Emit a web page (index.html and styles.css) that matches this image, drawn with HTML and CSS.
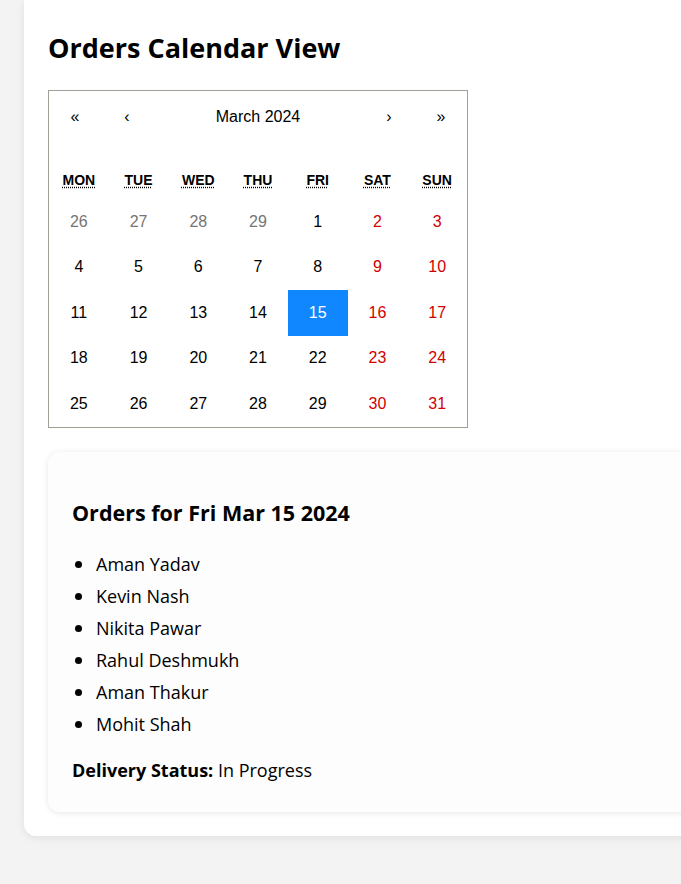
FILE: index.html
```html
<!DOCTYPE html>
<html lang="en">
<head>
<meta charset="utf-8">
<title>Orders Calendar View</title>
<link rel="stylesheet" href="styles.css">
</head>
<body>
<div class="page">
  <main class="panel">
    <h1 class="title">Orders Calendar View</h1>
    <div class="calendar">
      <div class="cal-nav">
        <button class="nav-btn">«</button>
        <button class="nav-btn">‹</button>
        <button class="nav-label">March 2024</button>
        <button class="nav-btn">›</button>
        <button class="nav-btn">»</button>
      </div>
      <div class="cal-weekdays">
        <div class="wd"><abbr title="Monday">MON</abbr></div>
        <div class="wd"><abbr title="Tuesday">TUE</abbr></div>
        <div class="wd"><abbr title="Wednesday">WED</abbr></div>
        <div class="wd"><abbr title="Thursday">THU</abbr></div>
        <div class="wd"><abbr title="Friday">FRI</abbr></div>
        <div class="wd"><abbr title="Saturday">SAT</abbr></div>
        <div class="wd"><abbr title="Sunday">SUN</abbr></div>
      </div>
      <div class="cal-days">
        <button class="tile other">26</button>
        <button class="tile other">27</button>
        <button class="tile other">28</button>
        <button class="tile other">29</button>
        <button class="tile">1</button>
        <button class="tile weekend">2</button>
        <button class="tile weekend">3</button>
        <button class="tile">4</button>
        <button class="tile">5</button>
        <button class="tile">6</button>
        <button class="tile">7</button>
        <button class="tile">8</button>
        <button class="tile weekend">9</button>
        <button class="tile weekend">10</button>
        <button class="tile">11</button>
        <button class="tile">12</button>
        <button class="tile">13</button>
        <button class="tile">14</button>
        <button class="tile active">15</button>
        <button class="tile weekend">16</button>
        <button class="tile weekend">17</button>
        <button class="tile">18</button>
        <button class="tile">19</button>
        <button class="tile">20</button>
        <button class="tile">21</button>
        <button class="tile">22</button>
        <button class="tile weekend">23</button>
        <button class="tile weekend">24</button>
        <button class="tile">25</button>
        <button class="tile">26</button>
        <button class="tile">27</button>
        <button class="tile">28</button>
        <button class="tile">29</button>
        <button class="tile weekend">30</button>
        <button class="tile weekend">31</button>
      </div>
    </div>
    <section class="orders-card">
      <h3 class="orders-title">Orders for Fri Mar 15 2024</h3>
      <ul class="orders-list">
        <li>Aman Yadav</li>
        <li>Kevin Nash</li>
        <li>Nikita Pawar</li>
        <li>Rahul Deshmukh</li>
        <li>Aman Thakur</li>
        <li>Mohit Shah</li>
      </ul>
      <p class="status"><strong>Delivery Status:</strong> In Progress</p>
    </section>
  </main>
</div>
</body>
</html>
```
FILE: styles.css
```css
html, body {
  margin: 0;
  padding: 0;
}
body {
  background: #f3f3f3;
  overflow: hidden;
  font-family: "Open Sans", "Noto Sans", sans-serif;
  color: #000;
}
.page {
  padding: 0 0 48px 24px;
}
.panel {
  width: 720px;
  background: #fff;
  border-radius: 0 0 0 12px;
  box-shadow: 0 2px 8px rgba(0, 0, 0, 0.08);
  padding: 24px 24px 24px 24px;
  box-sizing: border-box;
}
.title {
  margin: 0 0 18px 0;
  font-size: 27px;
  line-height: 48px;
  font-weight: 700;
}
.calendar {
  width: 420px;
  box-sizing: border-box;
  border: 1px solid #a0a096;
  background: #fff;
  font-family: "Liberation Sans", Arial, sans-serif;
}
.cal-nav {
  display: flex;
  height: 51px;
  margin-bottom: 19px;
}
.cal-nav button {
  border: 0;
  background: none;
  font-family: inherit;
  font-size: 16px;
  color: #000;
  padding: 0;
  margin: 0;
}
.nav-btn {
  width: 52px;
  flex: 0 0 52px;
}
.nav-label {
  flex: 1 1 auto;
}
.cal-weekdays {
  display: grid;
  grid-template-columns: repeat(7, 1fr);
  height: 38px;
  align-items: center;
  text-align: center;
  font-weight: 700;
  font-size: 14px;
}
.wd abbr {
  text-decoration: underline dotted;
  text-underline-offset: 2px;
}
.cal-days {
  display: grid;
  grid-template-columns: repeat(7, 1fr);
  grid-auto-rows: 45.5px;
}
.tile {
  border: 0;
  background: none;
  font-family: inherit;
  font-size: 16px;
  color: #000;
  padding: 0;
  margin: 0;
}
.tile.other {
  color: #757575;
}
.tile.weekend {
  color: #d10000;
}
.tile.active {
  background: #1087ff;
  color: #fff;
}
.orders-card {
  margin-top: 24px;
  background: #fdfdfd;
  border-radius: 12px;
  box-shadow: 0 1px 6px rgba(0, 0, 0, 0.1);
  padding: 24px 24px 14px 24px;
}
.orders-title {
  margin: 22px 0 20px 0;
  font-size: 21.5px;
  line-height: 30px;
  font-weight: 700;
}
.orders-list {
  margin: 0;
  padding-left: 24px;
  font-size: 18px;
  line-height: 32px;
  list-style: none;
}
.orders-list li {
  display: flex;
  align-items: center;
}
.orders-list li::before {
  content: "";
  flex: 0 0 7px;
  width: 7px;
  height: 7px;
  border-radius: 50%;
  background: #000;
  margin: 2px 14.5px 0 -21.5px;
}
.status {
  margin: 16px 0 14px 0;
  font-size: 18px;
  line-height: 28px;
}
```
